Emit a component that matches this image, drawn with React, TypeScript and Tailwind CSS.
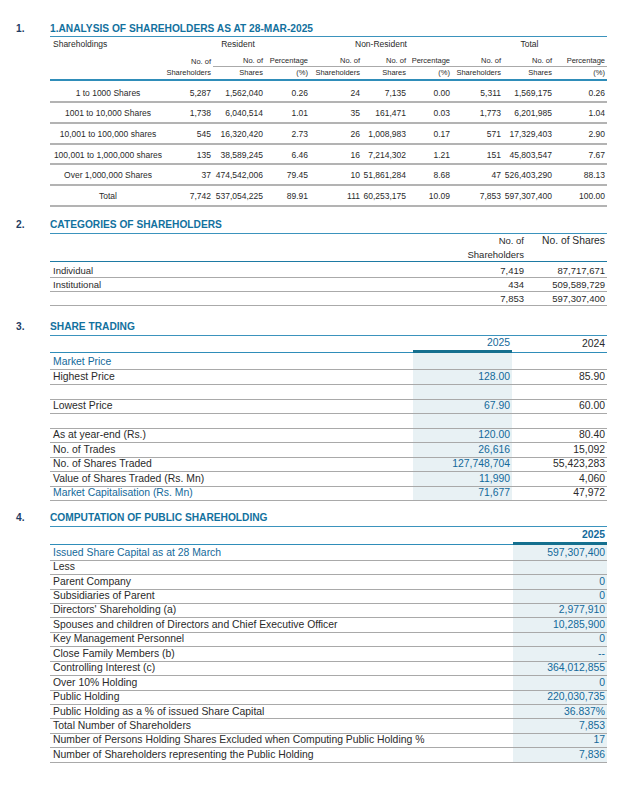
const teal = 'text-[#13699a]';

const dist = [
  ['1 to 1000 Shares', '5,287', '1,562,040', '0.26', '24', '7,135', '0.00', '5,311', '1,569,175', '0.26'],
  ['1001 to 10,000 Shares', '1,738', '6,040,514', '1.01', '35', '161,471', '0.03', '1,773', '6,201,985', '1.04'],
  ['10,001 to 100,000 shares', '545', '16,320,420', '2.73', '26', '1,008,983', '0.17', '571', '17,329,403', '2.90'],
  ['100,001 to 1,000,000 shares', '135', '38,589,245', '6.46', '16', '7,214,302', '1.21', '151', '45,803,547', '7.67'],
  ['Over 1,000,000 Shares', '37', '474,542,006', '79.45', '10', '51,861,284', '8.68', '47', '526,403,290', '88.13'],
  ['Total', '7,742', '537,054,225', '89.91', '111', '60,253,175', '10.09', '7,853', '597,307,400', '100.00'],
];

const trading: { label: string; a: string; b: string; hl?: boolean; h: string }[] = [
  { label: 'Market Price', a: '', b: '', hl: true, h: 'h-[17px]' },
  { label: 'Highest Price', a: '128.00', b: '85.90', h: 'h-[15px]' },
  { label: '', a: '', b: '', h: 'h-[14.5px]' },
  { label: 'Lowest Price', a: '67.90', b: '60.00', h: 'h-[14.5px]' },
  { label: '', a: '', b: '', h: 'h-[14.5px]' },
  { label: 'As at year-end (Rs.)', a: '120.00', b: '80.40', h: 'h-[14.5px]' },
  { label: 'No. of Trades', a: '26,616', b: '15,092', h: 'h-[14.5px]' },
  { label: 'No. of Shares Traded', a: '127,748,704', b: '55,423,283', h: 'h-[14.5px]' },
  { label: 'Value of Shares Traded (Rs. Mn)', a: '11,990', b: '4,060', h: 'h-[14.5px]' },
  { label: 'Market Capitalisation (Rs. Mn)', a: '71,677', b: '47,972', hl: true, h: 'h-[14.5px]' },
];

const pub: [string, string, boolean?][] = [
  ['Issued Share Capital as at 28 March', '597,307,400', true],
  ['Less', ''],
  ['Parent Company', '0'],
  ['Subsidiaries of Parent', '0'],
  ["Directors' Shareholding (a)", '2,977,910'],
  ['Spouses and children of Directors and Chief Executive Officer', '10,285,900'],
  ['Key Management Personnel', '0'],
  ['Close Family Members (b)', '--'],
  ['Controlling Interest (c)', '364,012,855'],
  ['Over 10% Holding', '0'],
  ['Public Holding', '220,030,735'],
  ['Public Holding as a % of issued Share Capital', '36.837%'],
  ['Total Number of Shareholders', '7,853'],
  ['Number of Persons Holding Shares Excluded when Computing Public Holding %', '17'],
  ['Number of Shareholders representing the Public Holding', '7,836'],
];

function SectionHead({ n, title }: { n: string; title: string }) {
  return (
    <div className="flex items-center h-[14px] text-[10.2px] font-bold leading-none">
      <span className="w-[50px] pl-[16px] text-[#1f3d63]">{n}</span>
      <span className="text-[#12719e]">{title}</span>
    </div>
  );
}

const g1 = 'grid grid-cols-[116px_47px_52px_45px_52px_46px_44px_51px_51px_53px]';

export default function App() {
  return (
    <div className="w-[637px] h-[789px] bg-white pt-[22px] font-['Liberation_Sans',Arial,sans-serif] text-[#2a2a2a]">
      <SectionHead n="1." title="1.ANALYSIS OF SHAREHOLDERS AS AT 28-MAR-2025" />
      <div className="ml-[50px] w-[557px] border-t-[1.5px] border-[#3b93bd]">
        <div className={`${g1} h-[15px] items-center text-[8.5px] leading-none`}>
          <div className="pl-[3px]">Shareholdings</div>
          <div className="col-span-3 text-center">Resident</div>
          <div className="col-span-3 text-center">Non-Resident</div>
          <div className="col-span-3 text-center">Total</div>
        </div>
        <div className={`${g1} h-[15px] text-[7.5px] leading-none text-right`}>
          <div />
          <div className="flex items-end justify-end pb-[2px] pr-[2px]">No. of</div>
          {['No. of', 'Percentage', 'No. of', 'No. of', 'Percentage', 'No. of', 'No. of', 'Percentage'].map((t, i) => (
            <div key={i} className="flex items-end justify-end pb-[2px] pr-[2px] border-b-[1.5px] border-[#aaaaaa]">{t}</div>
          ))}
        </div>
        <div className={`${g1} h-[14px] items-center text-[7.5px] leading-none text-right border-b-2 border-[#2f8db9]`}>
          <div />
          {['Shareholders', 'Shares', '(%)', 'Shareholders', 'Shares', '(%)', 'Shareholders', 'Shares', '(%)'].map((t, i) => (
            <div key={i} className="pr-[2px]">{t}</div>
          ))}
        </div>
        <div className="pt-[1.5px]">
          {dist.map((r) => (
            <div key={r[0]} className={`${g1} h-[20.7px] items-center pt-[2px] text-[8.5px] leading-none border-b-2 border-[#b3b3b3]`}>
              {r.map((c, i) => (
                <div key={i} className={i === 0 ? 'text-center' : 'text-right pr-[2px]'}>{c}</div>
              ))}
            </div>
          ))}
        </div>
      </div>

      <div className="mt-[11px]">
        <SectionHead n="2." title="CATEGORIES OF SHAREHOLDERS" />
      </div>
      <div className="ml-[50px] w-[557px] mt-[1px] border-t-[1.5px] border-[#3b93bd] text-[9.5px] leading-[14px]">
        <div className="grid grid-cols-[1fr_87px_83px] h-[28px] border-b-[1.5px] border-[#1e7aa3]">
          <div />
          <div className="text-right">No. of<br />Shareholders</div>
          <div className="text-right pr-[2px] text-[10.3px]">No. of Shares</div>
        </div>
        {[
          ['Individual', '7,419', '87,717,671', 'h-[16.5px] pt-[2px]'],
          ['Institutional', '434', '509,589,729', 'h-[14px]'],
          ['', '7,853', '597,307,400', 'h-[14px]'],
        ].map((r, i) => (
          <div key={i} className={`grid grid-cols-[1fr_87px_83px] items-center ${r[3]} border-b-[1.5px] border-[#aaaaaa]`}>
            <div className="pl-[3px]">{r[0]}</div>
            <div className="text-right">{r[1]}</div>
            <div className="text-right pr-[2px]">{r[2]}</div>
          </div>
        ))}
      </div>

      <div className="mt-[14px]">
        <SectionHead n="3." title="SHARE TRADING" />
      </div>
      <div className="ml-[50px] w-[557px] mt-[1px] border-t-[1.5px] border-[#3b93bd] text-[10.4px] leading-none">
        <div className="grid grid-cols-[363px_99px_95px] h-[17px]">
          <div className="border-b-[1.5px] border-[#2f8db9]" />
          <div className={`flex items-center justify-end pr-[2px] pt-[1px] border-b-[3.5px] border-[#15708f] ${teal}`}>2025</div>
          <div className="flex items-center justify-end pr-[2px] border-b-[1.5px] border-[#2f8db9]">2024</div>
        </div>
        {trading.map((r, i) => (
          <div key={i} className={`grid grid-cols-[363px_99px_95px] ${r.h} border-b-[1.5px] border-[#a9a9a9]`}>
            <div className={`flex items-center pl-[3px] ${i === 0 ? 'pt-[2px]' : ''} ${r.hl ? teal : ''}`}>{r.label}</div>
            <div className={`flex items-center justify-end pr-[2px] bg-[#e8f1f4] ${teal}`}>{r.a}</div>
            <div className="flex items-center justify-end pr-[2px]">{r.b}</div>
          </div>
        ))}
      </div>

      <div className="mt-[10px]">
        <SectionHead n="4." title="COMPUTATION OF PUBLIC SHAREHOLDING" />
      </div>
      <div className="ml-[50px] w-[557px] mt-[1px] border-t-[1.5px] border-[#3b93bd] text-[10.4px] leading-none">
        <div className="grid grid-cols-[463px_94px] h-[18px]">
          <div className="border-b-[1.5px] border-[#2f8db9]" />
          <div className={`flex items-center justify-end pr-[2px] pt-[1px] font-bold border-b-[3.5px] border-[#15708f] ${teal}`}>2025</div>
        </div>
        {pub.map(([l, v, hl], i) => (
          <div key={i} className={`grid grid-cols-[463px_94px] ${i === 0 ? 'h-[15.5px]' : 'h-[14.45px]'} border-b-[1.5px] border-[#a9a9a9]`}>
            <div className={`flex items-center pl-[3px] ${i === 0 ? 'pt-[2px]' : ''} ${hl ? teal : ''}`}>{l}</div>
            <div className={`flex items-center justify-end pr-[2px] bg-[#e8f1f4] ${i === 0 ? 'pt-[2px]' : ''} ${teal}`}>{v}</div>
          </div>
        ))}
      </div>
    </div>
  );
}
